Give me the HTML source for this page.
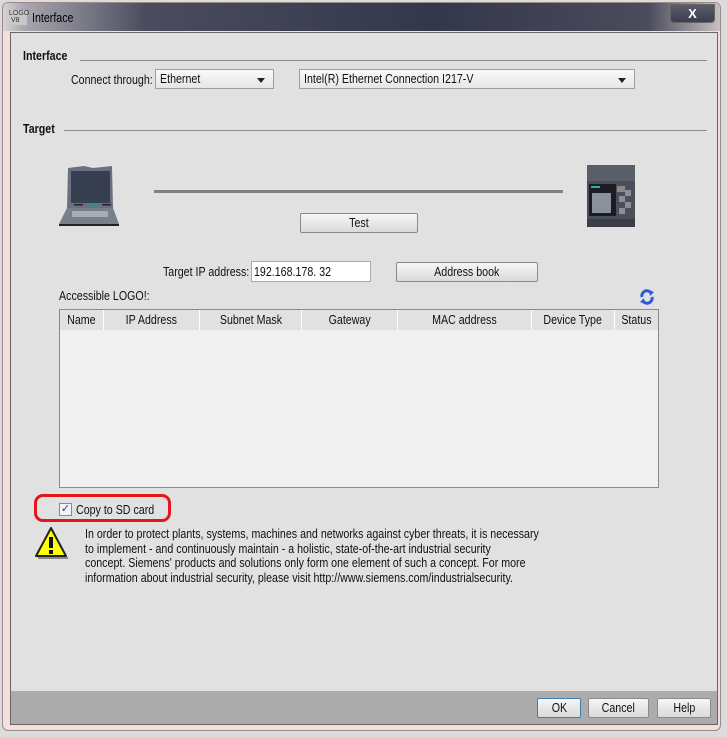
<!DOCTYPE html>
<html><head><meta charset="utf-8"><style>
*{box-sizing:border-box;margin:0;padding:0}
body{width:727px;height:737px;background:#dcdcdc;position:relative;overflow:hidden;font-family:"Liberation Sans",sans-serif;font-size:13px;color:#111}
.a{position:absolute}
.n{display:inline-block;transform:scaleX(.82);white-space:nowrap}
.l{transform-origin:0 0}.r{transform-origin:100% 0}.c{transform-origin:50% 0}
.win{left:2px;top:2px;width:719px;height:729px;background:#f3e0dc;border:1px solid #9a8a88;border-radius:6px}
.title{left:3px;top:3px;width:717px;height:28px;background:linear-gradient(90deg,#d8d4d4 0,#a8a6ae 3%,#4a4c5e 20%,#34374a 60%,#4a4c5c 90%,#c8c0c0 100%);border-radius:6px 6px 0 0}
.content{left:10px;top:32px;width:708px;height:693px;background:#e1e1e1;border:1px solid #6e6462}
.footer{left:11px;top:691px;width:706px;height:33px;background:#acacac}
.hdr{font-weight:bold;font-size:13px}
.line{height:1px;background:#8a8a8a}
.combo{height:20px;border:1px solid #9e9e9e;background:linear-gradient(#fafafa,#e6e6e6);padding:1px 4px;font-size:13px}
.combo:after{content:"";position:absolute;right:8px;top:8px;border:4px solid transparent;border-top:5px solid #222}
.btn{height:20px;border:1px solid #8a8a8a;border-radius:2px;background:linear-gradient(#f6f6f6,#dadada);text-align:center;line-height:18px}
.th{top:0;height:20px;line-height:20px;text-align:center;border-right:1px solid #fff;font-size:13px}
</style></head><body>
<div class="a win"></div>
<div class="a title"></div>
<div class="a" style="left:9px;top:10px;width:18px;height:15px;background:#c8c8c8;font-size:7px;line-height:7px;color:#333">LOGO<br>&nbsp;V8</div>
<div class="a" style="left:32px;top:10px;color:#000"><span class="n l">Interface</span></div>
<div class="a" style="left:670px;top:4px;width:45px;height:19px;border:1px solid #666;border-radius:0 0 4px 4px;background:linear-gradient(#5a5c6c,#3c3e50);color:#fff;font-weight:bold;text-align:center;line-height:17px">X</div>
<div class="a content"></div>
<div class="a footer"></div>

<div class="a hdr" style="left:23px;top:48px"><span class="n l">Interface</span></div>
<div class="a line" style="left:80px;top:60px;width:627px"></div>
<div class="a" style="left:20px;width:133px;top:72px;text-align:right"><span class="n r">Connect through:</span></div>
<div class="a combo" style="left:155px;top:69px;width:119px"><span class="n l">Ethernet</span></div>
<div class="a combo" style="left:299px;top:69px;width:336px"><span class="n l">Intel(R) Ethernet Connection I217-V</span></div>

<div class="a hdr" style="left:23px;top:121px"><span class="n l">Target</span></div>
<div class="a line" style="left:64px;top:130px;width:643px"></div>

<svg class="a" style="left:58px;top:166px" width="62" height="62" viewBox="0 0 62 62">
<path d="M10 2 L26 0 L35 2 L54 0 L55 42 L9 42Z" fill="#6b7080"/>
<rect x="13" y="5" width="39" height="32" fill="#363e50"/>
<rect x="31" y="38" width="9" height="2" fill="#1a9a8a"/><rect x="16" y="38" width="9" height="1.5" fill="#222"/><rect x="44" y="38" width="9" height="1.5" fill="#222"/>
<path d="M9 42 L55 42 L61 58 L1 58Z" fill="#7a7f8c"/>
<rect x="14" y="45" width="36" height="6" fill="#a8acb6"/>
<rect x="1" y="58" width="60" height="2" fill="#222"/>
</svg>
<div class="a" style="left:154px;top:190px;width:409px;height:3px;background:#808080"></div>
<svg class="a" style="left:587px;top:165px" width="48" height="62" viewBox="0 0 48 62">
<rect width="48" height="62" fill="#4a4f5a"/>
<rect y="0" width="48" height="16" fill="#5a606a"/>
<rect x="2" y="19" width="27" height="32" fill="#1a1c22"/>
<rect x="4" y="21" width="9" height="2" fill="#3aa"/>
<rect x="5" y="28" width="19" height="20" fill="#8a909c"/>
<rect x="30" y="21" width="8" height="6" fill="#888"/>
<rect x="32" y="31" width="6" height="6" fill="#8a8e98"/><rect x="38" y="37" width="6" height="6" fill="#8a8e98"/><rect x="32" y="43" width="6" height="6" fill="#8a8e98"/><rect x="38" y="25" width="6" height="6" fill="#8a8e98"/>
<rect y="54" width="48" height="8" fill="#3a3e48"/>
</svg>
<div class="a btn" style="left:300px;top:213px;width:118px"><span class="n c">Test</span></div>

<div class="a" style="left:100px;width:149px;top:264px;text-align:right"><span class="n r">Target IP address:</span></div>
<div class="a" style="left:251px;top:261px;width:120px;height:21px;background:#fff;border:1px solid #aaa;padding:2px 2px"><span class="n l">192.168.178. 32</span></div>
<div class="a btn" style="left:396px;top:262px;width:142px"><span class="n c">Address book</span></div>
<div class="a" style="left:59px;top:288px"><span class="n l">Accessible LOGO!:</span></div>
<svg class="a" style="left:639px;top:289px" width="16" height="16" viewBox="0 0 16 16"><path d="M3 8 A5 5 0 0 1 12 4" stroke="#2a5ad8" stroke-width="3" fill="none"/><path d="M10 1 L15 3 L11 7Z" fill="#2a5ad8"/><path d="M13 8 A5 5 0 0 1 4 12" stroke="#2a5ad8" stroke-width="3" fill="none"/><path d="M6 15 L1 13 L5 9Z" fill="#2a5ad8"/></svg>

<div class="a" style="left:59px;top:309px;width:600px;height:179px;background:#f0f0f0;border:1px solid #8a8a8a">
<div class="a" style="left:0;top:0;width:598px;height:20px;background:#e1e1e1"></div>
<div class="a th" style="left:0;width:44px"><span class="n c">Name</span></div>
<div class="a th" style="left:44px;width:96px"><span class="n c">IP Address</span></div>
<div class="a th" style="left:140px;width:102px"><span class="n c">Subnet Mask</span></div>
<div class="a th" style="left:242px;width:96px"><span class="n c">Gateway</span></div>
<div class="a th" style="left:338px;width:134px"><span class="n c">MAC address</span></div>
<div class="a th" style="left:472px;width:83px"><span class="n c">Device Type</span></div>
<div class="a th" style="left:555px;width:43px;border-right:0"><span class="n c">Status</span></div>
</div>

<div class="a" style="left:34px;top:494px;width:137px;height:28px;border:3px solid #e3161e;border-radius:9px"></div>
<div class="a" style="left:59px;top:503px;width:13px;height:13px;border:1px solid #8a8a8a;background:#f4f4f4;color:#2a3a9a;font-size:11px;line-height:11px;text-align:center">✓</div>
<div class="a" style="left:76px;top:502px"><span class="n l">Copy to SD card</span></div>
<svg class="a" style="left:34px;top:526px" width="34" height="34" viewBox="0 0 34 34"><path d="M17 2 L32 30 L2 30Z" fill="#ffff00" stroke="#222" stroke-width="2" stroke-linejoin="round"/><path d="M4 32 L33 32 L33 31" stroke="#888" stroke-width="2" fill="none"/><rect x="15" y="11" width="4" height="11" fill="#111"/><rect x="15" y="24" width="4" height="4" fill="#111"/></svg>
<div class="a" style="left:85px;top:527px;line-height:14.7px"><span class="n l">In order to protect plants, systems, machines and networks against cyber threats, it is necessary<br>to implement - and continuously maintain - a holistic, state-of-the-art industrial security<br>concept. Siemens' products and solutions only form one element of such a concept. For more<br>information about industrial security, please visit http://www.siemens.com/industrialsecurity.</span></div>

<div class="a btn" style="left:537px;top:698px;width:44px;border-color:#3c7fb1"><span class="n c">OK</span></div>
<div class="a btn" style="left:588px;top:698px;width:61px"><span class="n c">Cancel</span></div>
<div class="a btn" style="left:657px;top:698px;width:54px"><span class="n c">Help</span></div>
</body></html>
